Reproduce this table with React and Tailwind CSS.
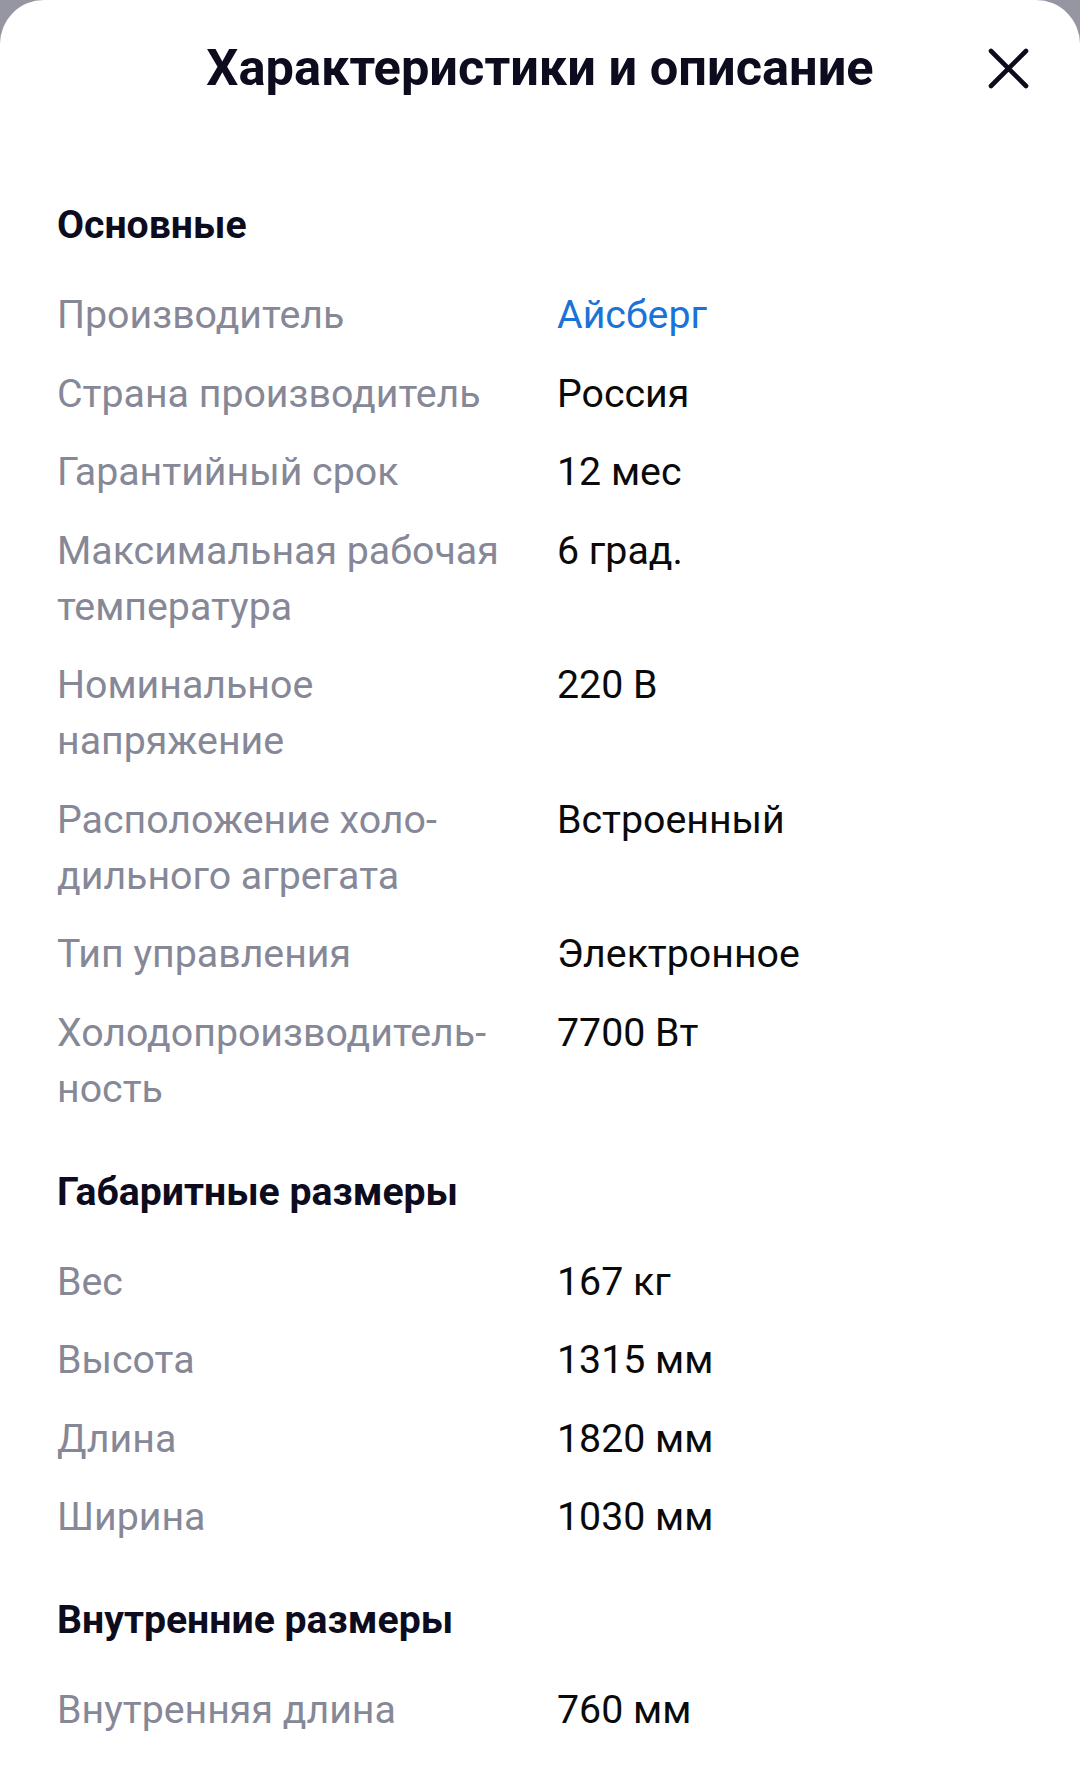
import React from "react";

const sections = [
  {
    title: "Основные",
    rows: [
      { label: "Производитель", value: "Айсберг", link: true },
      { label: "Страна производитель", value: "Россия" },
      { label: "Гарантийный срок", value: "12 мес" },
      { label: "Максимальная рабочая температура", value: "6 град." },
      { label: "Номинальное напряжение", value: "220 В" },
      { label: "Расположение холо\u00ADдильного агрегата", value: "Встроенный" },
      { label: "Тип управления", value: "Электронное" },
      { label: "Холодопроизводитель\u00ADность", value: "7700 Вт" },
    ],
  },
  {
    title: "Габаритные размеры",
    rows: [
      { label: "Вес", value: "167 кг" },
      { label: "Высота", value: "1315 мм" },
      { label: "Длина", value: "1820 мм" },
      { label: "Ширина", value: "1030 мм" },
    ],
  },
  {
    title: "Внутренние размеры",
    rows: [{ label: "Внутренняя длина", value: "760 мм" }],
  },
];

function CloseIcon() {
  return (
    <svg width="41" height="41" viewBox="0 0 41 41" fill="none">
      <path
        d="M3 3 L38 38 M38 3 L3 38"
        stroke="#0c0c1e"
        strokeWidth="4.6"
        strokeLinecap="round"
      />
    </svg>
  );
}

export default function App() {
  return (
    <div
      className="min-h-screen bg-[#9596a2]"
      style={{ fontFamily: "Roboto, 'Noto Sans', sans-serif" }}
    >
      <div className="bg-white rounded-t-[44px] min-h-[1782px] overflow-hidden">
        {/* Header */}
        <div className="grid grid-cols-[1fr_auto_1fr] items-center pt-[38px]">
          <div />
          <h1 className="text-[50.6px] leading-[60px] font-bold text-[#0c0c1e]">
            Характеристики и описание
          </h1>
          <div className="flex justify-end pr-[51px]">
            <button className="flex items-center justify-center">
              <CloseIcon />
            </button>
          </div>
        </div>

        {/* Specs */}
        <div className="px-[57px] pt-[99px]">
          {sections.map((section, i) => (
            <div key={section.title} className={i > 0 ? "mt-[47px]" : ""}>
              <h2 className="text-[39.2px] leading-[56px] font-bold text-[#0c0c1e] mb-[34px]">
                {section.title}
              </h2>
              <div className="flex flex-col gap-[22.5px]">
                {section.rows.map((row) => (
                  <div
                    key={row.label}
                    className="grid grid-cols-[500px_1fr] text-[39.3px] leading-[56px]"
                  >
                    <div className="pr-[36px] text-[#868897] hyphens-manual">
                      {row.label}
                    </div>
                    <div
                      className={row.link ? "text-[#1a73d6]" : "text-[#0a0a0a]"}
                    >
                      {row.value}
                    </div>
                  </div>
                ))}
              </div>
            </div>
          ))}
        </div>
      </div>
    </div>
  );
}
